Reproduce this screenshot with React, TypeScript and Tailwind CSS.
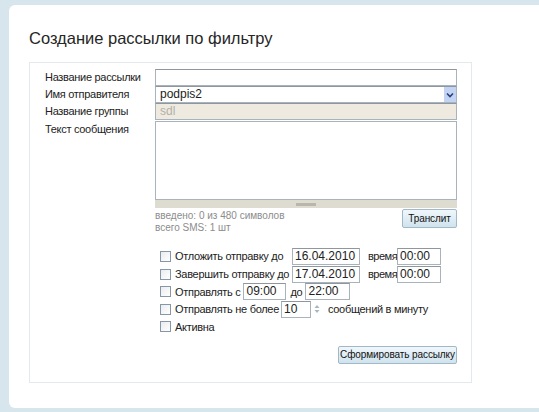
import React from "react";

function Checkbox() {
  return (
    <span className="inline-block w-[11px] h-[11px] border border-[#8896a5] bg-gradient-to-br from-[#e9ecef] to-white shrink-0 mr-[4px]" />
  );
}

const inp =
  "h-[17px] shrink-0 border border-[#a9b3bb] border-t-[#8e979f] bg-white px-[2px] text-[12px] leading-[15px] tracking-normal text-[#222] flex items-center";

const btn =
  "border border-[#a3b8c6] rounded-[2px] bg-gradient-to-b from-[#f0f7fb] to-[#cfe3ee] text-[10px] tracking-[-0.1px] text-[#111] font-medium whitespace-nowrap";

export default function App() {
  return (
    <div
      className="w-[539px] h-[412px] bg-[#d6e6ec] pt-[5px] pl-[9px] pb-[4px] overflow-hidden"
      style={{ fontFamily: '"Liberation Sans", Arial, sans-serif' }}
    >
      <div className="h-full bg-white rounded-l-[6px] pl-[20px] pt-[23px]">
        <h1 className="text-[16.5px] leading-[20px] text-[#262626]">
          Создание рассылки по фильтру
        </h1>
        <div className="mt-[14px] w-[443px] h-[321px] border border-[#e3eaed] pl-[15px] pt-[6px] text-[11px] tracking-[-0.3px] text-[#222] whitespace-nowrap">
          {/* top grid */}
          <div className="grid grid-cols-[110px_302px]">
            <div className="h-[17px] flex items-center">Название рассылки</div>
            <div className={inp} />
            <div className="h-[17px] flex items-center">Имя отправителя</div>
            <div className={inp + " justify-between pr-0 pl-[4px]"}>
              <span>podpis2</span>
              <span className="w-[12px] h-[15px] bg-[#c3d3f3] flex items-center justify-center">
                <svg width="8" height="6" viewBox="0 0 8 6">
                  <path d="M1 1.5 L4 4.5 L7 1.5" stroke="#2c3e78" strokeWidth="1.6" fill="none" />
                </svg>
              </span>
            </div>
            <div className="h-[17px] flex items-center">Название группы</div>
            <div className={inp + " !bg-[#eeeadf] !text-[#b3b0a8] pl-[4px]"}>sdl</div>
            <div className="pt-[2px] leading-[14px]">Текст сообщения</div>
            <div className="mt-[1px]">
              <div className="h-[79px] border border-[#a9b3bb] bg-white" />
              <div className="h-[8px] bg-[#dedbd1] flex items-center justify-center">
                <span className="w-[20px] h-[3px] bg-[#b9b6ae]" />
              </div>
              <div className="flex justify-between pt-[1px]">
                <div className="text-[10px] leading-[12px] tracking-normal text-[#8c8c8c] pt-[1px]">
                  <div>введено: 0 из 480 символов</div>
                  <div>всего SMS: 1 шт</div>
                </div>
                <button className={btn + " w-[55px] h-[19px]"}>Транслит</button>
              </div>
            </div>
          </div>

          {/* options */}
          <div className="ml-[110px] pl-[5px] mt-[13px] w-[302px]">
            <div className="h-[18px] flex items-center">
              <Checkbox />
              <span className="w-[117px] shrink-0">Отложить отправку до</span>
              <div className={inp + " w-[68px]"}>16.04.2010</div>
              <span className="ml-[8px] w-[29px] shrink-0 tracking-[-0.5px]">время</span>
              <div className={inp + " w-[44px]"}>00:00</div>
            </div>
            <div className="h-[18px] flex items-center">
              <Checkbox />
              <span className="w-[117px] shrink-0">Завершить отправку до</span>
              <div className={inp + " w-[68px]"}>17.04.2010</div>
              <span className="ml-[8px] w-[29px] shrink-0 tracking-[-0.5px]">время</span>
              <div className={inp + " w-[44px]"}>00:00</div>
            </div>
            <div className="h-[17.5px] flex items-center">
              <Checkbox />
              <span>Отправлять с</span>
              <div className={inp + " w-[43px] ml-[3px]"}>09:00</div>
              <span className="ml-[4px] w-[15px] shrink-0">до</span>
              <div className={inp + " w-[45px]"}>22:00</div>
            </div>
            <div className="h-[17.5px] flex items-center">
              <Checkbox />
              <span>Отправлять не более</span>
              <div className={inp + " w-[30px] ml-[2px]"}>10</div>
              <svg className="ml-[3px] shrink-0" width="6" height="10" viewBox="0 0 6 10">
                <path d="M0.5 4 L3 1 L5.5 4 Z" fill="#a8b4c0" />
                <path d="M0.5 6 L3 9 L5.5 6 Z" fill="#a8b4c0" />
              </svg>
              <span className="ml-[8px]">сообщений в минуту</span>
            </div>
            <div className="h-[17.5px] flex items-center">
              <Checkbox />
              <span>Активна</span>
            </div>
            <div className="flex justify-end mt-[10px]">
              <button className={btn + " w-[119px] h-[18px]"}>Сформировать рассылку</button>
            </div>
          </div>
        </div>
      </div>
    </div>
  );
}
